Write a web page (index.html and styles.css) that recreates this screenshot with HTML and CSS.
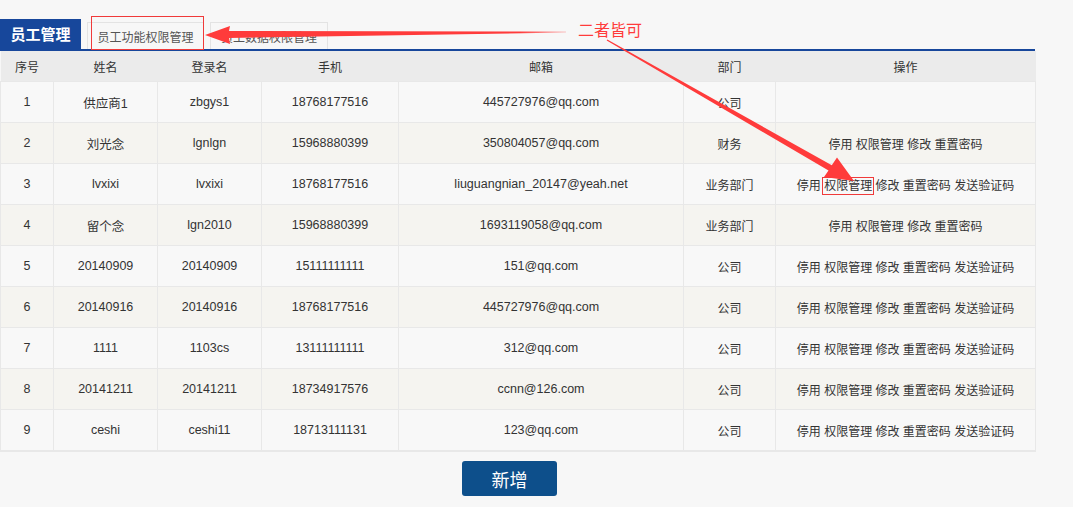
FILE: index.html
```html
<!DOCTYPE html>
<html lang="zh-CN">
<head>
  <meta charset="UTF-8">
  <title>员工管理</title>
  <link rel="stylesheet" href="styles.css">
</head>
<body>
  <div class="page">
    <div class="tabbar">
      <div class="tab-title">员工管理</div>
      <div class="tab">员工功能权限管理</div>
      <div class="tab tab-data">员工数据权限管理</div>
    </div>

    <table class="staff">
      <colgroup>
        <col style="width:53px">
        <col style="width:104px">
        <col style="width:104px">
        <col style="width:137px">
        <col style="width:285px">
        <col style="width:92px">
        <col style="width:260px">
      </colgroup>
      <thead>
        <tr>
          <th>序号</th><th>姓名</th><th>登录名</th><th>手机</th><th>邮箱</th><th>部门</th><th>操作</th>
        </tr>
      </thead>
      <tbody>
        <tr>
          <td>1</td><td>供应商1</td><td>zbgys1</td><td>18768177516</td><td>445727976@qq.com</td><td class="cn">公司</td>
          <td class="ops"></td>
        </tr>
        <tr>
          <td>2</td><td>刘光念</td><td>lgnlgn</td><td>15968880399</td><td>350804057@qq.com</td><td class="cn">财务</td>
          <td class="ops"><a>停用</a> <a>权限管理</a> <a>修改</a> <a>重置密码</a></td>
        </tr>
        <tr>
          <td>3</td><td>lvxixi</td><td>lvxixi</td><td>18768177516</td><td>liuguangnian_20147@yeah.net</td><td class="cn">业务部门</td>
          <td class="ops"><a>停用</a> <a class="marked">权限管理</a> <a>修改</a> <a>重置密码</a> <a>发送验证码</a></td>
        </tr>
        <tr>
          <td>4</td><td>留个念</td><td>lgn2010</td><td>15968880399</td><td>1693119058@qq.com</td><td class="cn">业务部门</td>
          <td class="ops"><a>停用</a> <a>权限管理</a> <a>修改</a> <a>重置密码</a></td>
        </tr>
        <tr>
          <td>5</td><td>20140909</td><td>20140909</td><td>15111111111</td><td>151@qq.com</td><td class="cn">公司</td>
          <td class="ops"><a>停用</a> <a>权限管理</a> <a>修改</a> <a>重置密码</a> <a>发送验证码</a></td>
        </tr>
        <tr>
          <td>6</td><td>20140916</td><td>20140916</td><td>18768177516</td><td>445727976@qq.com</td><td class="cn">公司</td>
          <td class="ops"><a>停用</a> <a>权限管理</a> <a>修改</a> <a>重置密码</a> <a>发送验证码</a></td>
        </tr>
        <tr>
          <td>7</td><td>1111</td><td>1103cs</td><td>13111111111</td><td>312@qq.com</td><td class="cn">公司</td>
          <td class="ops"><a>停用</a> <a>权限管理</a> <a>修改</a> <a>重置密码</a> <a>发送验证码</a></td>
        </tr>
        <tr>
          <td>8</td><td>20141211</td><td>20141211</td><td>18734917576</td><td>ccnn@126.com</td><td class="cn">公司</td>
          <td class="ops"><a>停用</a> <a>权限管理</a> <a>修改</a> <a>重置密码</a> <a>发送验证码</a></td>
        </tr>
        <tr>
          <td>9</td><td>ceshi</td><td>ceshi11</td><td>18713111131</td><td>123@qq.com</td><td class="cn">公司</td>
          <td class="ops"><a>停用</a> <a>权限管理</a> <a>修改</a> <a>重置密码</a> <a>发送验证码</a></td>
        </tr>
      </tbody>
    </table>

    <div class="actions">
      <button class="btn-add">新增</button>
    </div>
  </div>

  <!-- screenshot annotations -->
  <svg class="marks" viewBox="0 0 1073 507" width="1073" height="507">
    <defs>
      <linearGradient id="tail" gradientUnits="userSpaceOnUse" x1="520" y1="0" x2="568" y2="0">
        <stop offset="0" stop-color="#ff3b3b" stop-opacity="1"/>
        <stop offset="1" stop-color="#ff3b3b" stop-opacity="0.25"/>
      </linearGradient>
    </defs>
    <rect x="91.5" y="16.5" width="112" height="33" fill="none" stroke="#f03a3a" stroke-width="1"/>
    <polygon points="205,35 230,26 229,31 566,31.5 566,32.6 229,38 230,44" fill="url(#tail)"/>
    <polygon points="854,181 824,177 828.5,170.5 606.7,40.4 607.3,39.6 831.8,165.2 837,157.5" fill="#ff3b3b"/>
    <text class="note" x="578" y="36">二者皆可</text>
  </svg>
</body>
</html>
```

FILE: styles.css
```css
html, body {
  margin: 0;
  padding: 0;
}
body {
  background: #f7f7f7;
  font-family: "Liberation Sans", "Noto Sans CJK SC", sans-serif;
  font-size: 12px;
  color: #333;
  position: relative;
  width: 1073px;
  height: 507px;
  overflow: hidden;
}

.page {
  width: 1035px;
  padding-top: 19px;
}

/* tabs */
.tabbar {
  display: flex;
  align-items: flex-end;
  border-bottom: 2px solid #17479b;
  height: 30px;
}
.tab-title {
  width: 81px;
  height: 30px;
  line-height: 30px;
  background: #17479b;
  color: #fff;
  font-size: 15px;
  font-weight: bold;
  text-align: center;
  font-family: "Noto Sans CJK SC", sans-serif;
}
.tab {
  box-sizing: border-box;
  width: 117px;
  height: 27px;
  line-height: 27px;
  margin-left: 6px;
  border: 1px solid #e3e3e3;
  border-bottom: none;
  color: #555;
  text-align: center;
  font-family: "Noto Sans CJK SC", sans-serif;
}
.tab-data {
  width: 118px;
}

/* table */
.staff {
  width: 1035px;
  border-collapse: collapse;
  table-layout: fixed;
}
.staff th {
  height: 30px;
  padding: 0;
  background: #ebebeb;
  font-weight: normal;
  text-align: center;
}
.staff td {
  height: 40px;
  padding: 0;
  border: 1px solid #e8e8e8;
  text-align: center;
  white-space: nowrap;
  font-size: 12.5px;
}
.staff td.cn,
.staff td.ops {
  font-size: 12px;
}
.staff tbody tr:nth-child(odd) td {
  background: #f8f8f8;
}
.staff tbody tr:nth-child(even) td {
  background: #f5f4f0;
}
.staff tbody tr:last-child td {
  border-bottom-width: 2px;
}
.ops a {
  color: #333;
  cursor: pointer;
}
.ops a.marked {
  outline: 1px solid #f03a3a;
  outline-offset: 1px;
}

/* bottom button */
.actions {
  padding: 9px 0 0 462px;
}
.btn-add {
  width: 95px;
  height: 35px;
  border: none;
  border-radius: 3px;
  background: #0d4f8b;
  color: #fff;
  font-size: 18px;
  font-family: "Noto Sans CJK SC", sans-serif;
  cursor: pointer;
}

/* annotations */
.marks {
  position: absolute;
  top: 0;
  left: 0;
  pointer-events: none;
}
.note {
  fill: #ff3b3b;
  font-size: 16px;
  font-family: "Noto Sans CJK SC", sans-serif;
}
```
